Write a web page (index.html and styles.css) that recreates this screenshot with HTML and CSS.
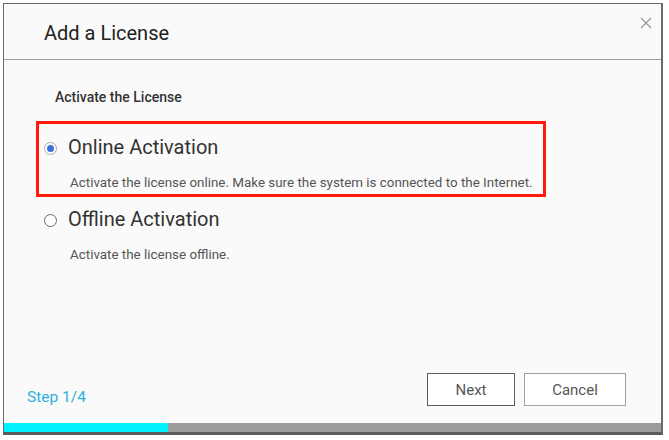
FILE: index.html
```html
<!DOCTYPE html>
<html lang="en">
<head>
    <meta charset="UTF-8">
    <meta name="viewport" content="width=device-width, initial-scale=1.0">
    <title>Add a License</title>
    <link rel="stylesheet" href="styles.css">
</head>
<body>
    <div class="dialog">
        <header class="dialog-header">
            <h1>Add a License</h1>
            <button class="close-btn" aria-label="Close">
                <svg width="12" height="12" viewBox="0 0 12 12">
                    <path d="M1 1 L11 11 M11 1 L1 11" stroke="#9a9a9a" stroke-width="1.3" fill="none"/>
                </svg>
            </button>
        </header>

        <div class="dialog-body">
            <h2>Activate the License</h2>

            <div class="options">
                <label class="option selected">
                    <span class="option-title">
                        <span class="radio checked"></span>
                        Online Activation
                    </span>
                    <span class="option-desc">Activate the license online. Make sure the system is connected to the Internet.</span>
                </label>

                <label class="option">
                    <span class="option-title">
                        <span class="radio"></span>
                        Offline Activation
                    </span>
                    <span class="option-desc">Activate the license offline.</span>
                </label>
            </div>
        </div>

        <footer class="dialog-footer">
            <span class="step">Step 1/4</span>
            <div class="actions">
                <button class="btn btn-next">Next</button>
                <button class="btn btn-cancel">Cancel</button>
            </div>
        </footer>

        <div class="progress">
            <div class="progress-fill" style="width: 25%"></div>
        </div>
    </div>
</body>
</html>
```

FILE: styles.css
```css
/* Base */
* {
    margin: 0;
    padding: 0;
    box-sizing: border-box;
    font-family: Roboto, 'Noto Sans', sans-serif;
}

body {
    background: #ffffff;
    color: #333;
}

/* Dialog */
.dialog {
    width: 660px;
    height: 432px;
    margin: 3px 0 0 3px;
    background: #fafafa;
    border: 1px solid #6a6a6a;
    border-bottom: 3px solid #5a5a5a;
    border-right: 2px solid #6a6a6a;
    display: flex;
    flex-direction: column;
}

/* Header */
.dialog-header {
    height: 56px;
    padding: 17px 0 0 40px;
    border-bottom: 1px solid #a0a0a0;
    display: flex;
    justify-content: space-between;
    align-items: flex-start;
}

.dialog-header h1 {
    font-size: 20px;
    font-weight: 400;
    line-height: 24px;
    color: #222;
}

.close-btn {
    background: none;
    border: none;
    margin: -4px 9px 0 0;
    width: 12px;
    height: 12px;
    cursor: pointer;
    display: flex;
}

/* Body */
.dialog-body {
    padding: 28px 0 0 0;
}

.dialog-body h2 {
    font-size: 14px;
    font-weight: 500;
    line-height: 18px;
    color: #333;
    padding-left: 51px;
    margin-bottom: 15px;
}

.options {
    margin-left: 32px;
    width: 510px;
    display: flex;
    flex-direction: column;
}

.option {
    border: 3px solid transparent;
    padding: 11px 0 3px 5px;
    display: flex;
    flex-direction: column;
    gap: 16px;
    cursor: pointer;
}

.option + .option {
    margin-top: -4px;
}

.option.selected {
    border-color: #ff1a0a;
}

.option-title {
    display: flex;
    align-items: center;
    gap: 11px;
    font-size: 20px;
    line-height: 24px;
    color: #333;
}

.option-desc {
    padding-left: 26px;
    font-size: 13.4px;
    line-height: 16px;
    color: #555;
}

.radio {
    width: 13px;
    height: 13px;
    border-radius: 50%;
    border: 1.5px solid #6a6a6a;
    background: #fff;
    display: flex;
    align-items: center;
    justify-content: center;
    margin-top: 3px;
}

.radio.checked {
    border: 1px solid #a8a8b0;
}

.radio.checked::after {
    content: "";
    width: 7px;
    height: 7px;
    border-radius: 50%;
    background: #3d6fd8;
}

/* Footer */
.dialog-footer {
    margin-top: auto;
    padding: 0 35px 17px 23px;
    display: flex;
    justify-content: space-between;
    align-items: flex-end;
}

.step {
    font-size: 15.5px;
    line-height: 17px;
    color: #2fb0da;
}

.actions {
    display: flex;
    gap: 9px;
}

.btn {
    height: 33px;
    background: #fff;
    font-size: 15px;
    color: #555;
    cursor: pointer;
}

.btn-next {
    width: 88px;
    border: 1px solid #5c5c5c;
}

.btn-cancel {
    width: 102px;
    border: 1px solid #a0a0a0;
}

/* Progress */
.progress {
    height: 9px;
    background: #9c9c9c;
}

.progress-fill {
    height: 100%;
    background: #00f2ff;
}
```
